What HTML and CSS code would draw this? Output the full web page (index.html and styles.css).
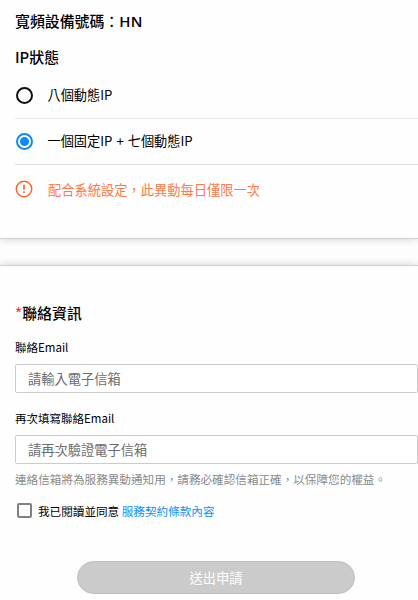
FILE: index.html
```html
<!DOCTYPE html>
<html lang="zh-Hant">
<head>
    <meta charset="UTF-8">
    <meta name="viewport" content="width=device-width, initial-scale=1.0">
    <title>IP狀態</title>
    <link rel="stylesheet" href="styles.css">
</head>
<body>
    <section class="card status-card">
        <h3 class="device">寬頻設備號碼<span class="colon">：</span><span class="device-id">HN</span></h3>
        <h3 class="status-title">IP狀態</h3>
        <div class="option">
            <span class="radio"></span>
            <span>八個動態IP</span>
        </div>
        <div class="option">
            <span class="radio checked"></span>
            <span class="option-text">一個固定IP + 七個動態IP</span>
        </div>
        <div class="notice">
            <svg class="notice-icon" width="18" height="18" viewBox="0 0 18 18">
                <circle cx="9" cy="9" r="7.7" fill="none" stroke="#ff6430" stroke-width="1.5"/>
                <path d="M9 4.8v5" stroke="#ff6430" stroke-width="1.7"/>
                <path d="M9 11.3v1.8" stroke="#ff6430" stroke-width="1.7"/>
            </svg>
            <span>配合系統設定，此異動每日僅限一次</span>
        </div>
    </section>
    <section class="card contact-card">
        <h3 class="contact-title"><span class="star">*</span>聯絡資訊</h3>
        <label class="label" for="email">聯絡Email</label>
        <input type="text" id="email" class="field" placeholder="請輸入電子信箱">
        <label class="label" for="email2">再次填寫聯絡Email</label>
        <input type="text" id="email2" class="field" placeholder="請再次驗證電子信箱">
        <p class="hint">連絡信箱將為服務異動通知用，請務必確認信箱正確，以保障您的權益。</p>
        <div class="agree">
            <span class="checkbox"></span>
            <span>我已閱讀並同意 <a class="link">服務契約條款內容</a></span>
        </div>
        <button class="btn">送出申請</button>
    </section>
</body>
</html>
```

FILE: styles.css
```css
* {
    box-sizing: border-box;
}
body {
    margin: 0;
    height: 600px;
    overflow: hidden;
    background-color: #fdfdfd;
    color: #000;
    font-family: "Noto Sans CJK TC", sans-serif;
    font-size: 13.2px;
}
.card {
    background-color: #fefefe;
    padding-left: 15px;
    border-style: solid;
    border-color: #d2d2d2;
    border-width: 0;
    box-shadow: 0 0 8px rgba(0, 0, 0, 0.18);
}
.status-card {
    height: 239px;
    padding-top: 11px;
    border-bottom-width: 1px;
}
.contact-card {
    height: 340px;
    margin-top: 26px;
    padding-top: 37px;
    border-top-width: 1px;
}
h3 {
    margin: 0;
    font-size: 14.9px;
    font-weight: 500;
    line-height: 20px;
}
.colon {
    font-weight: 400;
}
.device-id {
    font-family: "Open Sans", sans-serif;
    font-weight: 600;
    letter-spacing: 0.3px;
}
.status-title {
    margin-top: 16px;
}
.option {
    display: flex;
    align-items: center;
    height: 46px;
    padding-bottom: 1px;
    border-bottom: 1px solid #dedede;
    white-space: pre;
}
.option-text {
    margin-bottom: 1px;
    word-spacing: 1px;
}
.status-title + .option {
    height: 52px;
    padding-top: 5px;
    border-color: #e9e9e9;
}
.radio {
    width: 17px;
    height: 17px;
    margin: 1px 14.5px 0 1px;
    border: 2px solid #111;
    border-radius: 50%;
}
.radio.checked {
    border-color: #1089f5;
    background: radial-gradient(circle, #1089f5 4px, #fefefe 5px);
}
.notice {
    display: flex;
    align-items: center;
    height: 48px;
    color: #ff7a4b;
    font-size: 13.25px;
}
.notice-icon {
    margin: 0 15px 1px 0;
}
.star {
    color: #f33;
}
.label {
    display: block;
    margin-top: 16px;
    font-size: 11.5px;
    line-height: 16px;
}
.field {
    display: block;
    width: 403px;
    height: 29px;
    margin-top: 9px;
    padding: 0 12px;
    border: 1px solid #ccc;
    border-radius: 2px;
    background-color: #fff;
    font-family: inherit;
    font-size: 13.25px;
}
.field::placeholder {
    color: #6c6c6c;
}
.field + .label {
    margin-top: 17px;
}
.hint {
    margin: 7px 0 0;
    color: #8b8b8b;
    font-size: 11.6px;
    line-height: 16px;
}
.agree {
    display: flex;
    align-items: center;
    height: 16px;
    margin-top: 16px;
    font-size: 11.6px;
}
.checkbox {
    width: 15px;
    height: 15px;
    margin: 0 6px 2px 2px;
    border: 2px solid #808080;
    border-radius: 2px;
}
.link {
    color: #0d8ffb;
}
.btn {
    display: block;
    width: 278px;
    height: 33px;
    margin: 42px 0 0 62px;
    padding: 0 0 1px;
    border: 1px solid #c0c0c0;
    border-radius: 17px;
    background-color: #cbcbcb;
    color: #fff;
    font-family: inherit;
    font-size: 13.25px;
}
```
